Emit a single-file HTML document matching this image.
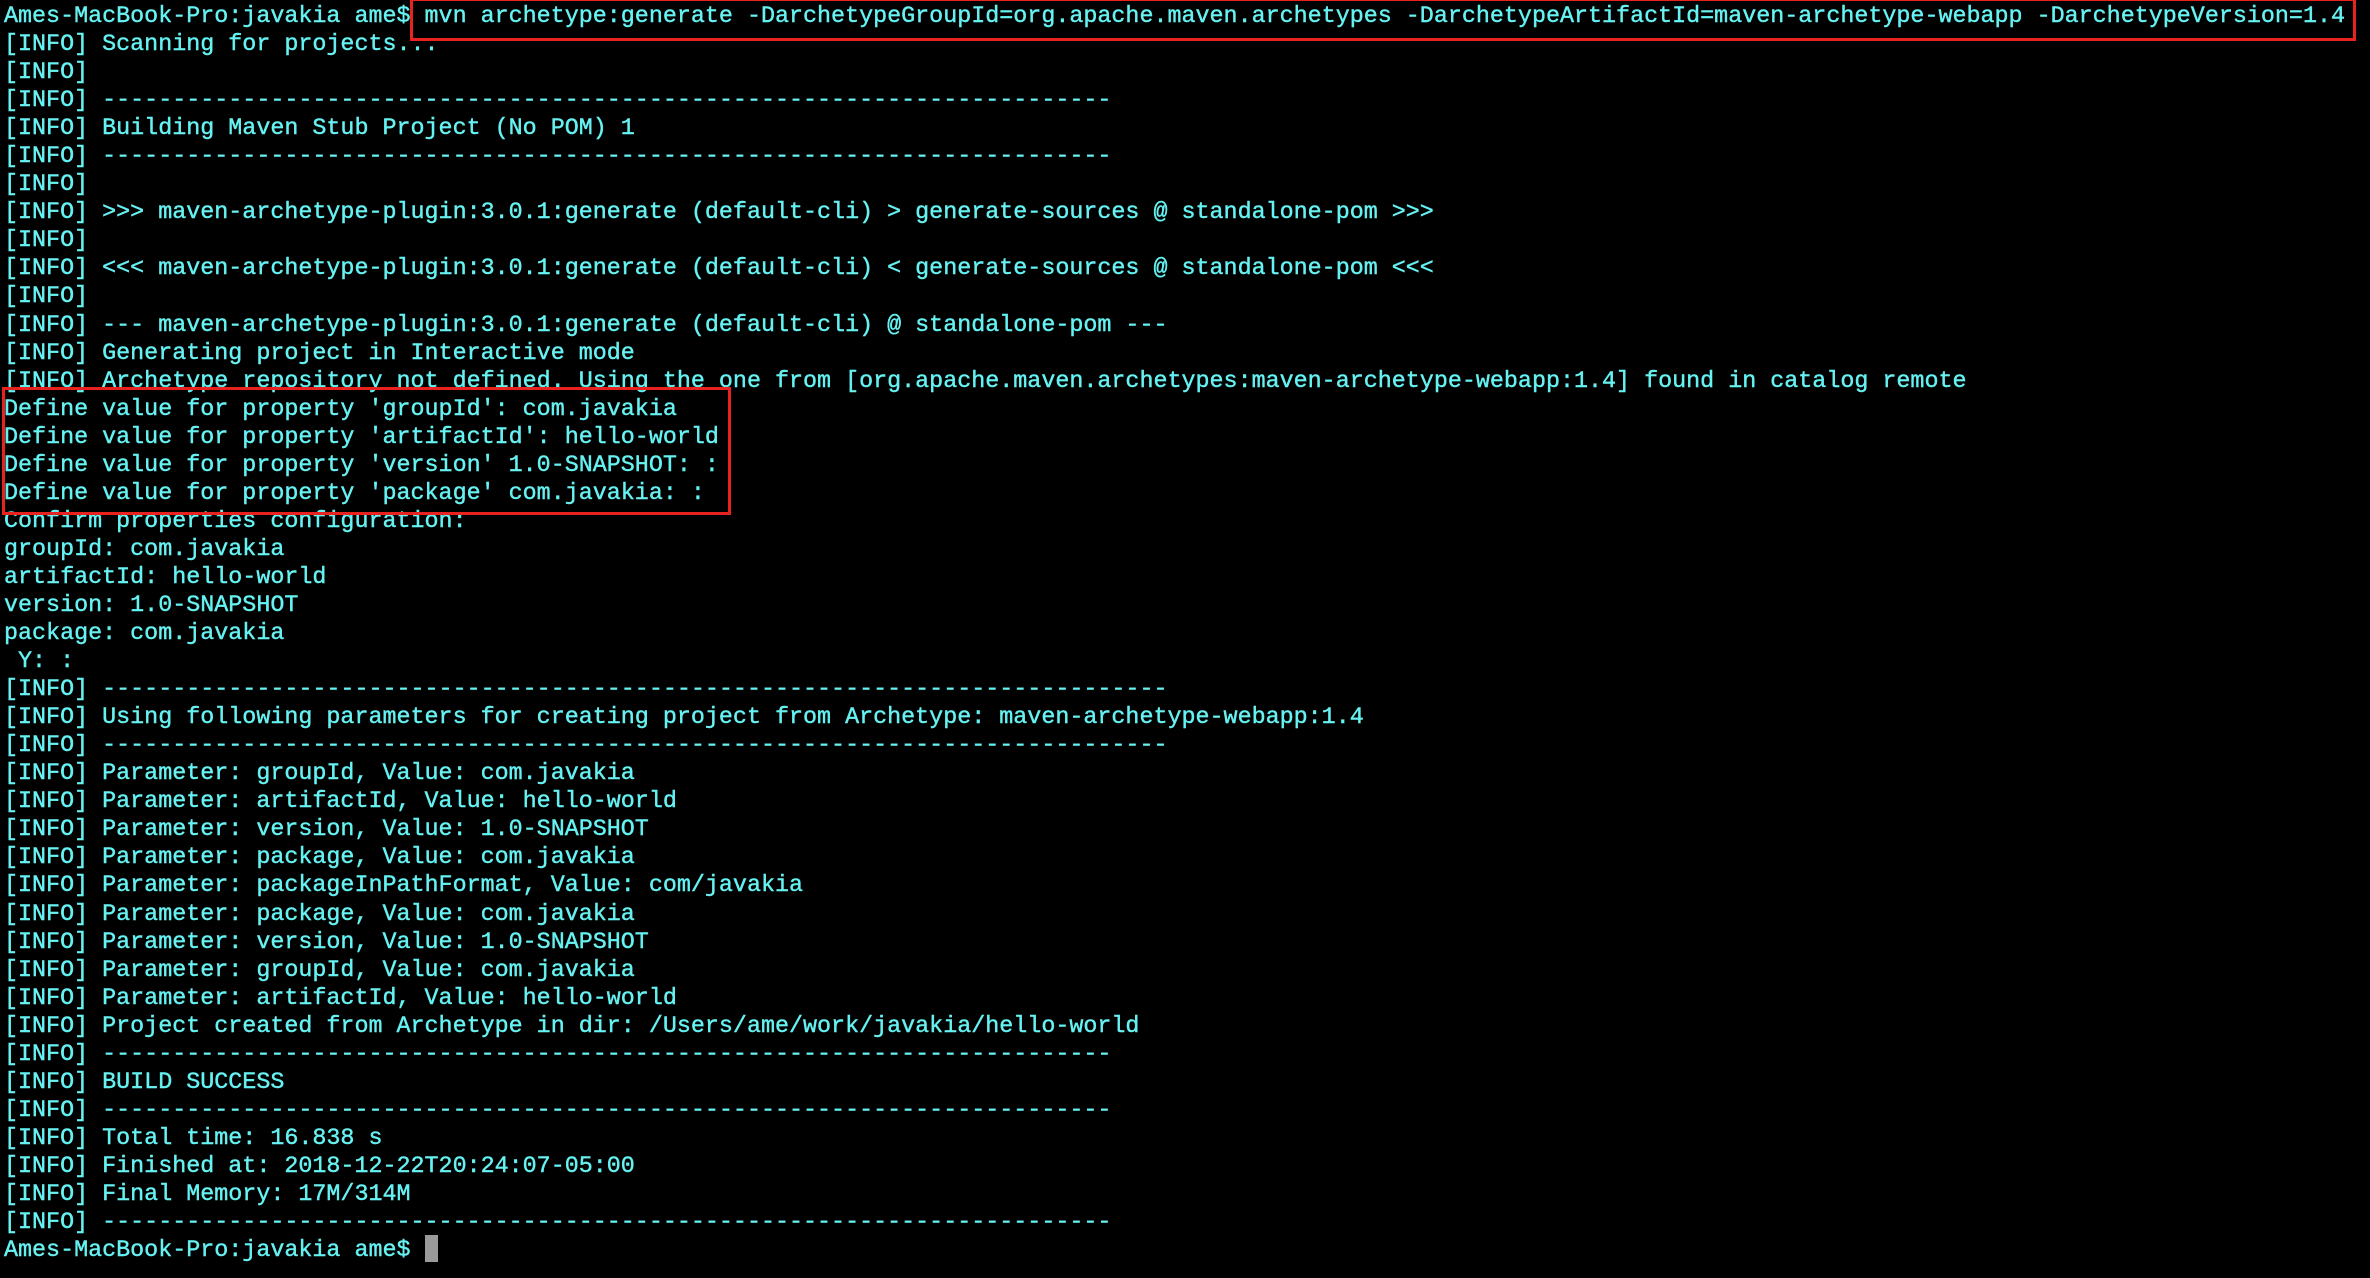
<!DOCTYPE html>
<html><head><meta charset="utf-8"><style>
html,body{margin:0;padding:0;background:#000;width:2370px;height:1278px;overflow:hidden}
pre{margin:0;position:absolute;left:4px;top:3px;font-family:"Liberation Mono","DejaVu Sans Mono",monospace;font-size:23.37px;line-height:28.04px;color:#66f2f2;white-space:pre;-webkit-text-stroke:0.4px #66f2f2}
.box{position:absolute;border:3px solid #e8231f;box-sizing:border-box}
.cur{position:absolute;left:425px;top:1235px;width:13px;height:27px;background:#9a9a9a}
</style></head><body>
<pre>Ames-MacBook-Pro:javakia ame$ mvn archetype:generate -DarchetypeGroupId=org.apache.maven.archetypes -DarchetypeArtifactId=maven-archetype-webapp -DarchetypeVersion=1.4
[INFO] Scanning for projects...
[INFO]
[INFO] ------------------------------------------------------------------------
[INFO] Building Maven Stub Project (No POM) 1
[INFO] ------------------------------------------------------------------------
[INFO]
[INFO] &gt;&gt;&gt; maven-archetype-plugin:3.0.1:generate (default-cli) &gt; generate-sources @ standalone-pom &gt;&gt;&gt;
[INFO]
[INFO] &lt;&lt;&lt; maven-archetype-plugin:3.0.1:generate (default-cli) &lt; generate-sources @ standalone-pom &lt;&lt;&lt;
[INFO]
[INFO] --- maven-archetype-plugin:3.0.1:generate (default-cli) @ standalone-pom ---
[INFO] Generating project in Interactive mode
[INFO] Archetype repository not defined. Using the one from [org.apache.maven.archetypes:maven-archetype-webapp:1.4] found in catalog remote
Define value for property 'groupId': com.javakia
Define value for property 'artifactId': hello-world
Define value for property 'version' 1.0-SNAPSHOT: :
Define value for property 'package' com.javakia: :
Confirm properties configuration:
groupId: com.javakia
artifactId: hello-world
version: 1.0-SNAPSHOT
package: com.javakia
 Y: :
[INFO] ----------------------------------------------------------------------------
[INFO] Using following parameters for creating project from Archetype: maven-archetype-webapp:1.4
[INFO] ----------------------------------------------------------------------------
[INFO] Parameter: groupId, Value: com.javakia
[INFO] Parameter: artifactId, Value: hello-world
[INFO] Parameter: version, Value: 1.0-SNAPSHOT
[INFO] Parameter: package, Value: com.javakia
[INFO] Parameter: packageInPathFormat, Value: com/javakia
[INFO] Parameter: package, Value: com.javakia
[INFO] Parameter: version, Value: 1.0-SNAPSHOT
[INFO] Parameter: groupId, Value: com.javakia
[INFO] Parameter: artifactId, Value: hello-world
[INFO] Project created from Archetype in dir: /Users/ame/work/javakia/hello-world
[INFO] ------------------------------------------------------------------------
[INFO] BUILD SUCCESS
[INFO] ------------------------------------------------------------------------
[INFO] Total time: 16.838 s
[INFO] Finished at: 2018-12-22T20:24:07-05:00
[INFO] Final Memory: 17M/314M
[INFO] ------------------------------------------------------------------------
Ames-MacBook-Pro:javakia ame$ </pre>
<div class="box" style="left:410px;top:-2px;width:1946px;height:43px"></div>
<div class="box" style="left:2px;top:387px;width:729px;height:128px"></div>
<div class="cur"></div>
</body></html>
